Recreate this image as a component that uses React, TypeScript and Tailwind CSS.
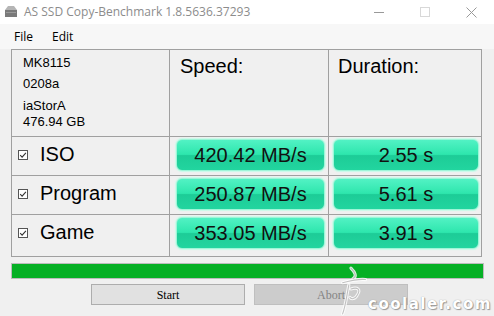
import React from 'react';

const rows = [
  { name: 'ISO', speed: '420.42 MB/s', time: '2.55 s' },
  { name: 'Program', speed: '250.87 MB/s', time: '5.61 s' },
  { name: 'Game', speed: '353.05 MB/s', time: '3.91 s' },
];

function CheckBox() {
  return (
    <svg width="10" height="10" viewBox="0 0 10 10" className="shrink-0">
      <rect x="0.5" y="0.5" width="9" height="9" fill="#fff" stroke="#555" />
      <path d="M2.2 5.2 L4.1 7.1 L7.9 2.9" fill="none" stroke="#333" strokeWidth="1.1" />
    </svg>
  );
}

// green result tile
function Tile({ children }: { children: React.ReactNode }) {
  return (
    <div className="flex h-[32px] w-full items-center justify-center rounded-[6px] border border-[#9ef5d8] bg-[linear-gradient(to_bottom,#52f2c4_0%,#2ee6ad_48%,#1dcc97_52%,#22d59f_100%)] text-[20px] text-[#111] shadow-[0_0_1px_1px_#c8fbe9]">
      {children}
    </div>
  );
}

export default function App() {
  return (
    <div className="relative h-[316px] w-[494px] overflow-hidden bg-[#f0f0f0] font-['Liberation_Sans',Arial,sans-serif]">
      {/* title bar */}
      <div className="flex h-[24px] items-center bg-white font-['Open_Sans',sans-serif] text-[12px] text-[#8c8c8c]">
        <svg width="16" height="16" viewBox="0 0 16 16" className="ml-[3px]">
          <path d="M2 6 L5 2 L11 2 L14 6 Z" fill="#b5b5b5" />
          <rect x="2" y="6" width="12" height="7" fill="#7a7a7a" />
          <rect x="3" y="8" width="10" height="1" fill="#9a9a9a" />
        </svg>
        <span className="ml-[5px]">AS SSD Copy-Benchmark 1.8.5636.37293</span>
        <div className="ml-auto flex items-center">
          <div className="flex w-[46px] justify-center">
            <div className="h-px w-[10px] bg-[#999]" />
          </div>
          <div className="flex w-[46px] justify-center">
            <div className="h-[10px] w-[10px] border border-[#d8d8d8]" />
          </div>
          <div className="flex w-[46px] justify-center">
            <svg width="11" height="11" viewBox="0 0 11 11">
              <path d="M0.5 0.5 L10.5 10.5 M10.5 0.5 L0.5 10.5" stroke="#999" strokeWidth="1" />
            </svg>
          </div>
        </div>
      </div>

      {/* menu */}
      <div className="flex h-[25px] items-center gap-[19px] bg-[#f7f7f7] pl-[14px] font-['Open_Sans',sans-serif] text-[12px] text-black">
        <span>File</span>
        <span>Edit</span>
      </div>

      <div className="pl-[11px]">
        {/* result table */}
        <div className="grid w-[471px] grid-cols-[157px_158px_152px] grid-rows-[86px_38px_38px_41px] gap-px bg-[#a0a0a0] p-px">
          <div className="bg-[#f0f0f0] pl-[11px] pt-[5px] text-[13px] text-black">
            <div className="leading-[16px]">MK8115</div>
            <div className="mt-[5px] leading-[16px]">0208a</div>
            <div className="mt-[6px] leading-[16px]">iaStorA</div>
            <div className="leading-[16px]">476.94 GB</div>
          </div>
          <div className="bg-[#f0f0f0] pl-[10px] pt-[4px] text-[20px] leading-[24px] text-black">Speed:</div>
          <div className="bg-[#f0f0f0] pl-[9px] pt-[4px] text-[20px] leading-[24px] text-black">Duration:</div>

          {rows.map((r) => (
            <React.Fragment key={r.name}>
              <div className="flex items-start gap-[12px] bg-[#f0f0f0] pl-[6px] pt-[6px] text-[20px] leading-[23px] text-black">
                <div className="flex h-[23px] items-center">
                  <CheckBox />
                </div>
                <span>{r.name}</span>
              </div>
              <div className="bg-[#f0f0f0] pl-[6px] pr-[3px] pt-[2px]">
                <Tile>{r.speed}</Tile>
              </div>
              <div className="bg-[#f0f0f0] pl-[4px] pr-[2px] pt-[2px]">
                <Tile>{r.time}</Tile>
              </div>
            </React.Fragment>
          ))}
        </div>

        {/* progress */}
        <div className="mt-[6px] h-[16px] w-[473px] border border-[#bcbcbc] bg-[#e6e6e6]">
          <div className="h-full w-full bg-[#06b025]" />
        </div>

        {/* buttons */}
        <div className="ml-[80px] mt-[5px] flex gap-[9px] font-['Liberation_Serif',serif] text-[12px]">
          <div className="flex h-[21px] w-[154px] items-center justify-center border border-[#adadad] bg-[#e1e1e1] text-black">
            Start
          </div>
          <div className="flex h-[21px] w-[154px] items-center justify-center border border-[#bfbfbf] bg-[#cccccc] text-[#838383]">
            Abort
          </div>
        </div>
      </div>

      {/* watermark */}
      <div className="pointer-events-none absolute left-[336px] top-[264px] flex items-end">
        <svg width="34" height="52" viewBox="0 0 32 50">
          <path
            d="M14 4 C18 8 20 12 16 14 M6 18 C14 16 22 14 28 15 M12 20 C10 30 9 40 6 48 M14 24 C20 22 24 24 20 30 C18 34 14 34 13 32"
            fill="none"
            stroke="#ffffff"
            strokeWidth="3"
            strokeLinecap="round"
            opacity="0.85"
          />
          <path
            d="M14 4 C18 8 20 12 16 14 M6 18 C14 16 22 14 28 15 M12 20 C10 30 9 40 6 48 M14 24 C20 22 24 24 20 30 C18 34 14 34 13 32"
            fill="none"
            stroke="#9a9a9a"
            strokeWidth="1"
            strokeLinecap="round"
            opacity="0.6"
          />
        </svg>
        <span className="mb-[1px] ml-[-2px] font-['DejaVu_Sans',sans-serif] text-[15px] font-bold tracking-[1.5px] text-white [text-shadow:0_0_1px_#888,1px_1px_1px_#999]">
          coolaler.com
        </span>
      </div>
    </div>
  );
}
